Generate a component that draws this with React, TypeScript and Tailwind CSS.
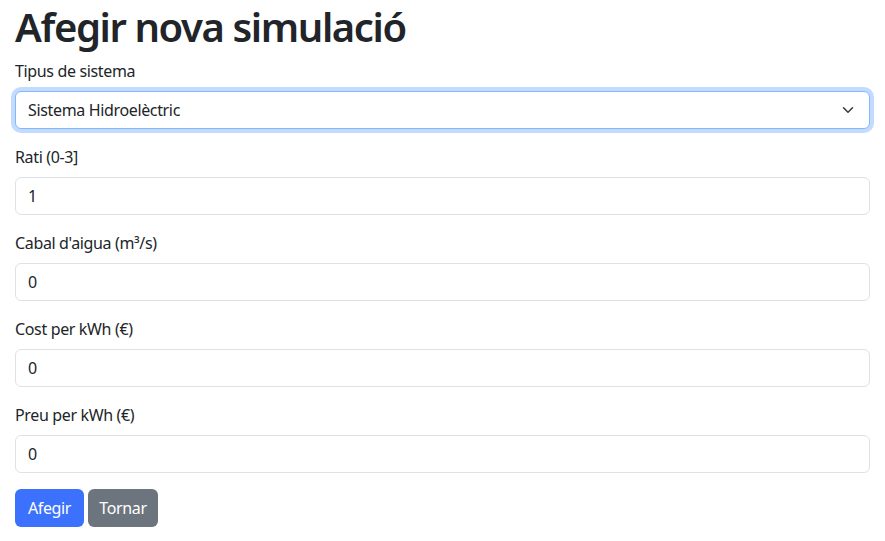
import React from "react";

const font = { fontFamily: '"Noto Sans", "Open Sans", sans-serif' };

function Field({ label, value }: { label: string; value: string }) {
  return (
    <div className="mb-4">
      <label className="block mb-2 text-[16px] leading-6 text-[#212529] tracking-[-0.35px]">{label}</label>
      <div className="h-[38px] w-full rounded-[6px] border border-[#dee2e6] bg-white px-3 flex items-center text-[16px] text-[#212529]">
        {value}
      </div>
    </div>
  );
}

export default function App() {
  return (
    <div className="bg-white min-h-[541px] px-[15px] pt-[3px] text-[#212529]" style={font}>
      <h1 className="text-[40px] leading-[48px] font-semibold mb-2 tracking-[-1.4px]">Afegir nova simulació</h1>
      <div className="mb-4">
        <label className="block mb-2 text-[16px] leading-6 tracking-[-0.35px]">Tipus de sistema</label>
        <div className="h-[38px] w-full rounded-[6px] border border-[#86b7fe] bg-white pl-3 pr-3 flex items-center justify-between text-[16px] shadow-[0_0_0_4px_rgba(13,110,253,0.25)]">
          <span className="tracking-[-0.35px]">Sistema Hidroelèctric</span>
          <svg width="16" height="12" viewBox="0 0 16 16" className="mr-[1px]">
            <path d="m2 5 6 6 6-6" fill="none" stroke="#343a40" strokeWidth="2" strokeLinecap="round" strokeLinejoin="round" />
          </svg>
        </div>
      </div>
      <Field label="Rati (0-3]" value="1" />
      <Field label="Cabal d'aigua (m³/s)" value="0" />
      <Field label="Cost per kWh (€)" value="0" />
      <Field label="Preu per kWh (€)" value="0" />
      <div className="flex gap-1 tracking-[-0.35px]">
        <button className="h-[38px] w-[69px] rounded-[6px] bg-[#3b71fd] text-white text-[16px]">Afegir</button>
        <button className="h-[38px] w-[70px] rounded-[6px] bg-[#6c757d] text-white text-[16px]">Tornar</button>
      </div>
    </div>
  );
}
